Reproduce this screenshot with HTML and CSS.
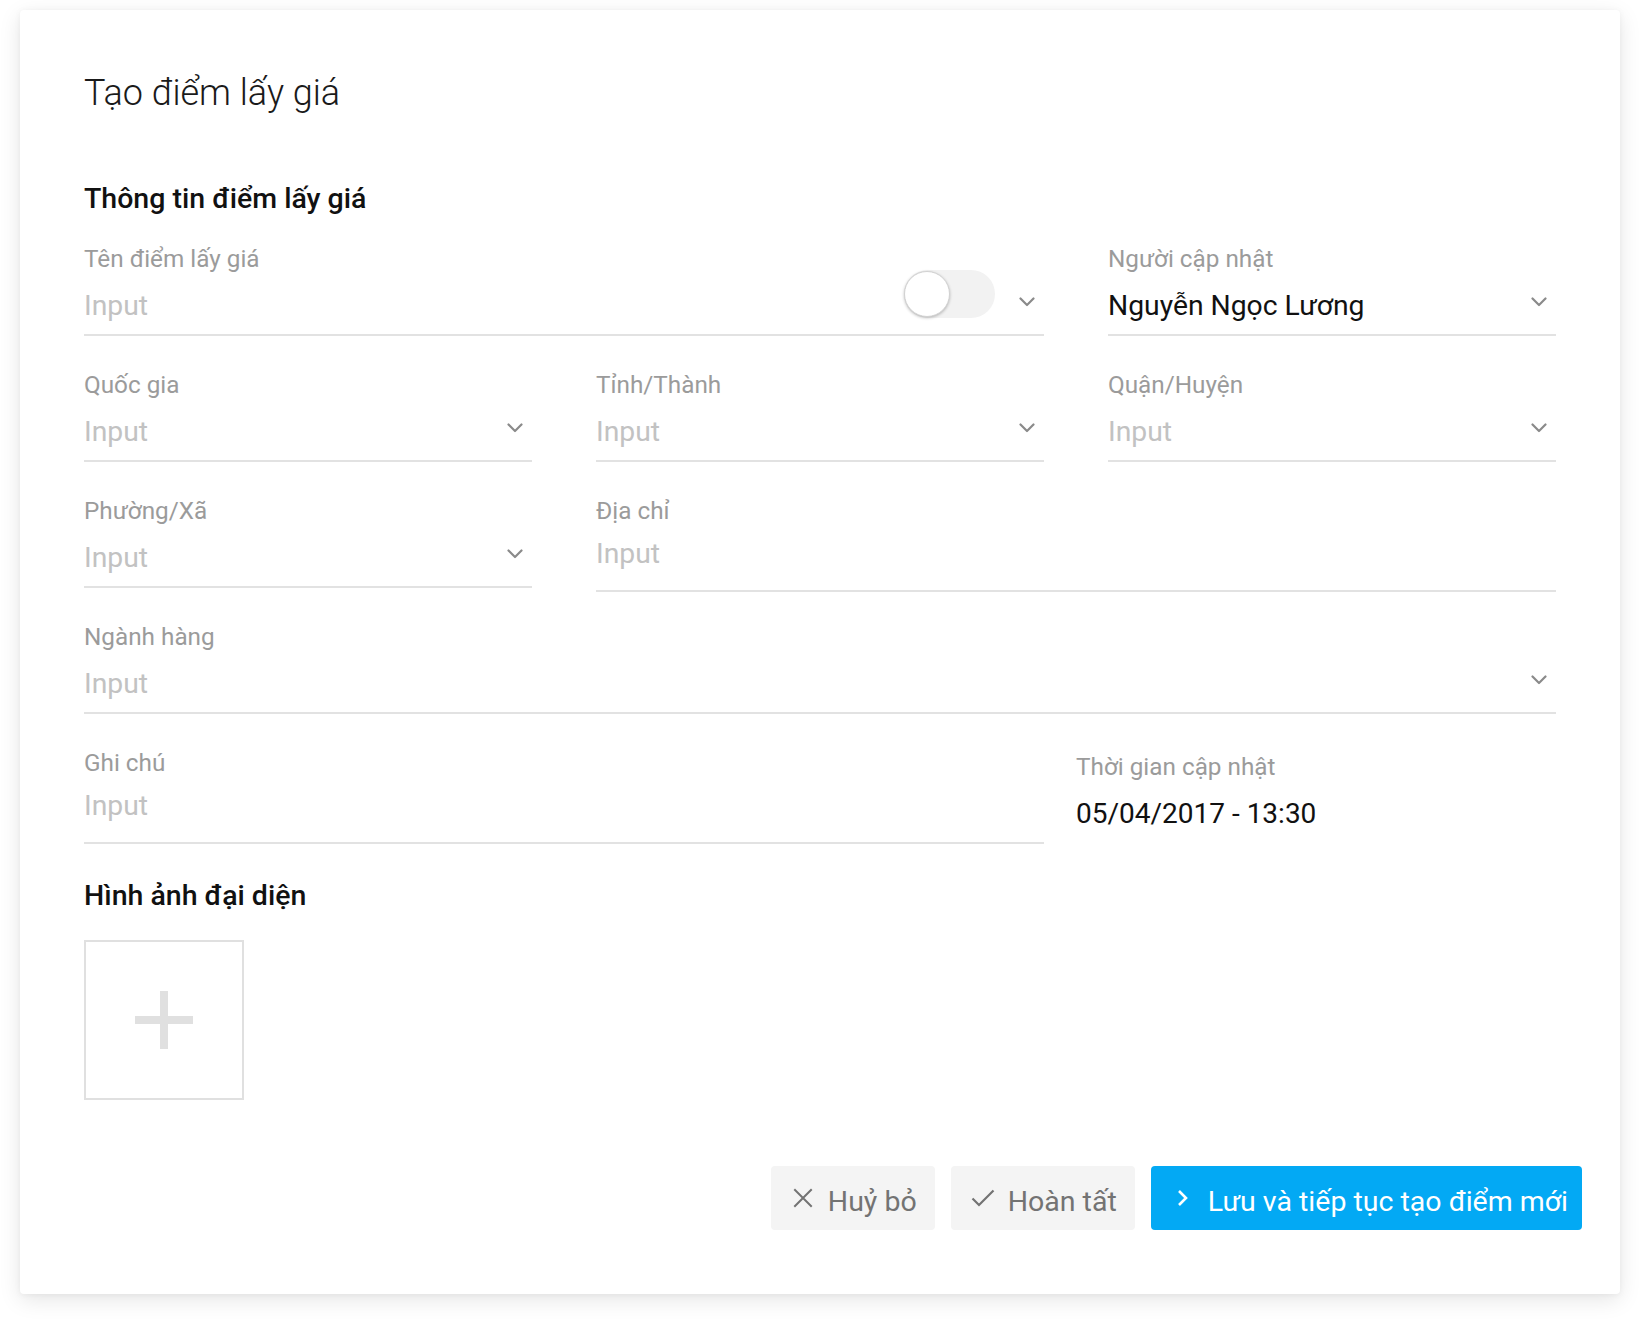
FILE: index.html
```html
<!DOCTYPE html>
<html lang="vi">
<head>
<meta charset="utf-8">
<title>Tạo điểm lấy giá</title>
<link rel="stylesheet" href="styles.css">
</head>
<body>
<div class="card">
  <h1 class="title">Tạo điểm lấy giá</h1>

  <h2 class="section-title">Thông tin điểm lấy giá</h2>

  <div class="form-grid">
    <div class="field span-2">
      <div class="label">Tên điểm lấy giá</div>
      <div class="control">
        <span class="value placeholder">Input</span>
        <span class="toggle"><span class="knob"></span></span>
        <svg class="chev" viewBox="0 0 16 10" width="16" height="10"><polyline points="1.5,1.5 8,8 14.5,1.5"/></svg>
      </div>
    </div>
    <div class="field">
      <div class="label">Người cập nhật</div>
      <div class="control">
        <span class="value">Nguyễn Ngọc Lương</span>
        <svg class="chev" viewBox="0 0 16 10" width="16" height="10"><polyline points="1.5,1.5 8,8 14.5,1.5"/></svg>
      </div>
    </div>

    <div class="field">
      <div class="label">Quốc gia</div>
      <div class="control">
        <span class="value placeholder">Input</span>
        <svg class="chev" viewBox="0 0 16 10" width="16" height="10"><polyline points="1.5,1.5 8,8 14.5,1.5"/></svg>
      </div>
    </div>
    <div class="field">
      <div class="label">Tỉnh/Thành</div>
      <div class="control">
        <span class="value placeholder">Input</span>
        <svg class="chev" viewBox="0 0 16 10" width="16" height="10"><polyline points="1.5,1.5 8,8 14.5,1.5"/></svg>
      </div>
    </div>
    <div class="field">
      <div class="label">Quận/Huyện</div>
      <div class="control">
        <span class="value placeholder">Input</span>
        <svg class="chev" viewBox="0 0 16 10" width="16" height="10"><polyline points="1.5,1.5 8,8 14.5,1.5"/></svg>
      </div>
    </div>

    <div class="field">
      <div class="label">Phường/Xã</div>
      <div class="control">
        <span class="value placeholder">Input</span>
        <svg class="chev" viewBox="0 0 16 10" width="16" height="10"><polyline points="1.5,1.5 8,8 14.5,1.5"/></svg>
      </div>
    </div>
    <div class="field span-2 textarea tight">
      <div class="label">Địa chỉ</div>
      <div class="control">
        <span class="value placeholder">Input</span>
      </div>
    </div>

    <div class="field span-3">
      <div class="label">Ngành hàng</div>
      <div class="control">
        <span class="value placeholder">Input</span>
        <svg class="chev" viewBox="0 0 16 10" width="16" height="10"><polyline points="1.5,1.5 8,8 14.5,1.5"/></svg>
      </div>
    </div>

    <div class="field span-2 textarea">
      <div class="label">Ghi chú</div>
      <div class="control">
        <span class="value placeholder">Input</span>
      </div>
    </div>
    <div class="info">
      <div class="label">Thời gian cập nhật</div>
      <div class="info-value">05/04/2017 - 13:30</div>
    </div>
  </div>

  <h2 class="section-title image-title">Hình ảnh đại diện</h2>
  <div class="upload">
    <svg viewBox="0 0 58 58" width="58" height="58"><rect x="25" y="0" width="8" height="58"/><rect x="0" y="25" width="58" height="8"/></svg>
  </div>

  <div class="footer">
    <button class="btn btn-cancel">
      <svg class="icon" viewBox="0 0 24 24" width="24" height="24"><path d="M4 4 L20 20 M20 4 L4 20"/></svg>
      <span class="btn-text">Huỷ bỏ</span>
    </button>
    <button class="btn btn-done">
      <svg class="icon" viewBox="0 0 24 24" width="24" height="24"><polyline points="1.5,12.5 8,19 22.5,4.5"/></svg>
      <span class="btn-text">Hoàn tất</span>
    </button>
    <button class="btn btn-primary">
      <svg class="icon" viewBox="0 0 24 24" width="24" height="24"><polyline points="8,5 15,12 8,19"/></svg>
      <span class="btn-text">Lưu và tiếp tục tạo điểm mới</span>
    </button>
  </div>
</div>
</body>
</html>
```

FILE: styles.css
```css
* { box-sizing: border-box; }

html, body {
  margin: 0;
  padding: 0;
  background: #ffffff;
}

body {
  padding: 10px 20px 30px 20px;
  font-family: Roboto, "Noto Sans", "Liberation Sans", sans-serif;
  color: #212121;
}

.card {
  width: 1600px;
  background: #fff;
  border-radius: 4px;
  box-shadow: 0 6px 22px rgba(0, 0, 0, 0.10), 0 1px 6px rgba(0, 0, 0, 0.05);
  padding: 61px 64px 64px 64px;
}

.title {
  margin: 0;
  font-size: 36px;
  line-height: 44px;
  font-weight: 300;
  color: #1a1a1a;
}

.section-title {
  margin: 68px 0 0 0;
  font-size: 28.5px;
  line-height: 32px;
  font-weight: 500;
  color: #111;
}

.form-grid {
  margin-top: 30px;
  display: grid;
  grid-template-columns: repeat(3, 1fr);
  column-gap: 64px;
  row-gap: 35px;
  align-items: start;
}

.span-2 { grid-column: span 2; }
.span-3 { grid-column: span 3; }

.label {
  font-size: 24.3px;
  line-height: 28px;
  color: #9b9b9b;
}

.control {
  margin-top: 17px;
  height: 46px;
  padding-bottom: 12px;
  border-bottom: 2px solid #e2e2e2;
  display: flex;
  align-items: center;
}

.value {
  flex: 1;
  font-size: 28.3px;
  line-height: 32px;
  color: #111;
  white-space: nowrap;
}

.value.placeholder { color: #c2c2c2; }

.textarea .control {
  margin-top: 13px;
  height: 54px;
  padding-bottom: 20px;
}

.tight { margin-bottom: -4px; }

.chev {
  flex: none;
  width: 16px;
  height: 10px;
  margin-right: 9px;
  margin-bottom: 8px;
  fill: none;
  stroke: #8a8a8a;
  stroke-width: 2.2;
  stroke-linecap: round;
  stroke-linejoin: round;
}

.toggle {
  flex: none;
  width: 91px;
  height: 48px;
  border-radius: 24px;
  background: #f2f2f2;
  display: flex;
  align-items: center;
  margin-right: 24px;
  margin-bottom: 24px;
}

.knob {
  width: 46px;
  height: 46px;
  border-radius: 50%;
  background: #fff;
  border: 1px solid #d2d2d2;
  box-shadow: 0 1px 3px rgba(0, 0, 0, 0.25);
}

.info {
  margin-left: -32px;
  padding-top: 4px;
}

.info-value {
  margin-top: 17px;
  font-size: 28px;
  line-height: 32px;
  color: #111;
}

.image-title { margin-top: 36px; }

.upload {
  margin-top: 28px;
  width: 160px;
  height: 160px;
  border: 2px solid #e0e0e0;
  display: flex;
  align-items: center;
  justify-content: center;
}

.upload svg { fill: #e0e0e0; }

.footer {
  margin-top: 66px;
  margin-right: -26px;
  display: flex;
  justify-content: flex-end;
  gap: 16px;
}

.btn {
  height: 64px;
  border: none;
  border-radius: 4px;
  padding: 0 18px 0 20px;
  display: flex;
  align-items: center;
  gap: 13px;
  font-family: Roboto, "Noto Sans", "Liberation Sans", sans-serif;
  font-size: 28.5px;
  line-height: 32px;
  background: #f4f4f4;
  color: #737373;
  cursor: pointer;
}

.btn-text {
  padding-top: 8px;
  white-space: nowrap;
}

.icon {
  flex: none;
  width: 24px;
  height: 24px;
  fill: none;
  stroke: #737373;
  stroke-width: 2;
  stroke-linecap: square;
  stroke-linejoin: miter;
}

.btn-done .icon { stroke-width: 2.2; stroke-linecap: butt; }

.btn-primary {
  background: #03a9f4;
  color: #fff;
  padding-right: 14px;
}

.btn-primary .icon {
  stroke: #fff;
  stroke-width: 2.6;
  stroke-linecap: butt;
}
```
